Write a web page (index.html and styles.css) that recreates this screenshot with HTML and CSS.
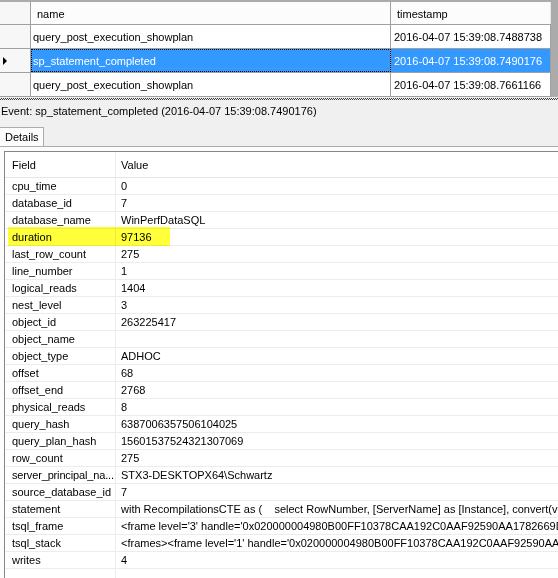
FILE: index.html
```html
<!DOCTYPE html>
<html lang="en">
<head>
    <meta charset="UTF-8">
    <title>Live Data - sp_statement_completed</title>
    <link rel="stylesheet" href="styles.css">
</head>
<body>
    <div class="event-grid">
        <div class="grid-row header">
            <div class="cell selector"></div>
            <div class="cell name">name</div>
            <div class="cell stamp">timestamp</div>
        </div>
        <div class="grid-row">
            <div class="cell selector"></div>
            <div class="cell name">query_post_execution_showplan</div>
            <div class="cell stamp">2016-04-07 15:39:08.7488738</div>
        </div>
        <div class="grid-row selected">
            <div class="cell selector"><span class="row-arrow"></span></div>
            <div class="cell name focused">sp_statement_completed</div>
            <div class="cell stamp">2016-04-07 15:39:08.7490176</div>
        </div>
        <div class="grid-row">
            <div class="cell selector"></div>
            <div class="cell name">query_post_execution_showplan</div>
            <div class="cell stamp">2016-04-07 15:39:08.7661166</div>
        </div>
    </div>
    <div class="splitter"><div class="splitter-dots"></div></div>

    <div class="event-label">Event: sp_statement_completed (2016-04-07 15:39:08.7490176)</div>

    <div class="tab-strip">
        <div class="tab active">Details</div>
    </div>

    <div class="tab-page">
        <div class="prop-grid">
            <div class="prop-row prop-header">
                <div class="prop-name">Field</div>
                <div class="prop-value">Value</div>
            </div>
            <div class="prop-row"><div class="prop-name">cpu_time</div><div class="prop-value">0</div></div>
            <div class="prop-row"><div class="prop-name">database_id</div><div class="prop-value">7</div></div>
            <div class="prop-row"><div class="prop-name">database_name</div><div class="prop-value">WinPerfDataSQL</div></div>
            <div class="prop-row marked"><div class="prop-name">duration</div><div class="prop-value">97136</div></div>
            <div class="prop-row"><div class="prop-name">last_row_count</div><div class="prop-value">275</div></div>
            <div class="prop-row"><div class="prop-name">line_number</div><div class="prop-value">1</div></div>
            <div class="prop-row"><div class="prop-name">logical_reads</div><div class="prop-value">1404</div></div>
            <div class="prop-row"><div class="prop-name">nest_level</div><div class="prop-value">3</div></div>
            <div class="prop-row"><div class="prop-name">object_id</div><div class="prop-value">263225417</div></div>
            <div class="prop-row"><div class="prop-name">object_name</div><div class="prop-value"></div></div>
            <div class="prop-row"><div class="prop-name">object_type</div><div class="prop-value">ADHOC</div></div>
            <div class="prop-row"><div class="prop-name">offset</div><div class="prop-value">68</div></div>
            <div class="prop-row"><div class="prop-name">offset_end</div><div class="prop-value">2768</div></div>
            <div class="prop-row"><div class="prop-name">physical_reads</div><div class="prop-value">8</div></div>
            <div class="prop-row"><div class="prop-name">query_hash</div><div class="prop-value">6387006357506104025</div></div>
            <div class="prop-row"><div class="prop-name">query_plan_hash</div><div class="prop-value">15601537524321307069</div></div>
            <div class="prop-row"><div class="prop-name">row_count</div><div class="prop-value">275</div></div>
            <div class="prop-row"><div class="prop-name tight">server_principal_na...</div><div class="prop-value">STX3-DESKTOPX64\Schwartz</div></div>
            <div class="prop-row"><div class="prop-name">source_database_id</div><div class="prop-value">7</div></div>
            <div class="prop-row"><div class="prop-name">statement</div><div class="prop-value">with RecompilationsCTE as (&nbsp;&nbsp;&nbsp; select RowNumber, [ServerName] as [Instance], convert(varc</div></div>
            <div class="prop-row"><div class="prop-name">tsql_frame</div><div class="prop-value">&lt;frame level='3' handle='0x020000004980B00FF10378CAA192C0AAF92590AA1782669D00</div></div>
            <div class="prop-row"><div class="prop-name">tsql_stack</div><div class="prop-value">&lt;frames&gt;&lt;frame level='1' handle='0x020000004980B00FF10378CAA192C0AAF92590AA178</div></div>
            <div class="prop-row"><div class="prop-name">writes</div><div class="prop-value">4</div></div>
            <div class="prop-row"><div class="prop-name"></div><div class="prop-value"></div></div>
        </div>
    </div>
</body>
</html>
```

FILE: styles.css
```css
html, body {
    margin: 0;
    padding: 0;
}
body {
    width: 558px;
    height: 578px;
    overflow: hidden;
    background: #f0f0f0;
    font-family: "Liberation Sans", Arial, sans-serif;
    font-size: 11px;
    color: #000;
}

/* top event list */
.event-grid {
    background: #ababab;
    padding-top: 2px;
    height: 95px;
}
.grid-row {
    display: flex;
    height: 23px;
    background: #fff;
    width: 551px;
    border-bottom: 1px solid #a0a0a0;
}
.grid-row.header {
    height: 22px;
    background: #fcfcfc;
}
.cell {
    box-sizing: border-box;
    height: 100%;
    border-right: 1px solid #a0a0a0;
    display: flex;
    align-items: center;
    white-space: nowrap;
    overflow: hidden;
}
.cell.selector {
    width: 31px;
    background: #f7f7f7;
    padding-left: 3px;
}
.cell.name {
    width: 360px;
    padding-left: 2px;
}
.cell.stamp {
    width: 160px;
    padding-left: 3px;
}
.header .cell.name,
.header .cell.stamp {
    padding-left: 6px;
    padding-top: 1px;
}
.header .cell.stamp {
    border-right-color: #e3e8f0;
}
.selected .cell.name,
.selected .cell.stamp {
    background: #3399ff;
    color: #fff;
}
.cell.focused {
    outline: 1px dotted #000;
    outline-offset: -1px;
}
.row-arrow {
    width: 0;
    height: 0;
    border-left: 4px solid #000;
    border-top: 4px solid transparent;
    border-bottom: 4px solid transparent;
}

.splitter {
    padding-top: 1px;
    box-sizing: border-box;
    height: 4px;
}
.splitter-dots {
    height: 2px;
    background: repeating-conic-gradient(#3a3a3a 0 25%, #f0f0f0 0 50%) 0 0 / 2px 2px;
}

.event-label {
    height: 24px;
    padding: 4px 0 0 1px;
    box-sizing: border-box;
    white-space: nowrap;
}

/* tabs */
.tab-strip {
    height: 21px;
    display: flex;
    align-items: flex-end;
}
.tab {
    height: 19px;
    width: 44px;
    box-sizing: border-box;
    border-top: 1px solid #acacac;
    border-right: 1px solid #acacac;
    background: #fcfcfc;
    padding: 3px 0 0 5px;
}
.tab-page {
    border-top: 1px solid #acacac;
    background: #fcfcfc;
    padding: 4px 0 0 4px;
    height: 431px;
}

/* property grid */
.prop-grid {
    background: #fff;
    border-top: 1px solid #828790;
    border-left: 1px solid #828790;
    height: 100%;
}
.prop-row {
    position: relative;
    display: flex;
    height: 16px;
    line-height: 16px;
    border-bottom: 1px solid #ececec;
    white-space: nowrap;
}
.prop-header {
    height: 25px;
    line-height: 26px;
    border-bottom-color: #e5e5e5;
}
.prop-name {
    box-sizing: border-box;
    width: 111px;
    flex: none;
    padding-left: 7px;
    border-right: 1px solid #ececec;
    overflow: hidden;
}
.prop-name.tight {
    letter-spacing: -0.15px;
}
.prop-value {
    padding-left: 5px;
    overflow: hidden;
}
.prop-row.marked::after {
    content: "";
    position: absolute;
    left: 3px;
    top: -2px;
    width: 162px;
    height: 19px;
    background: #ffff3a;
    mix-blend-mode: multiply;
}
```
